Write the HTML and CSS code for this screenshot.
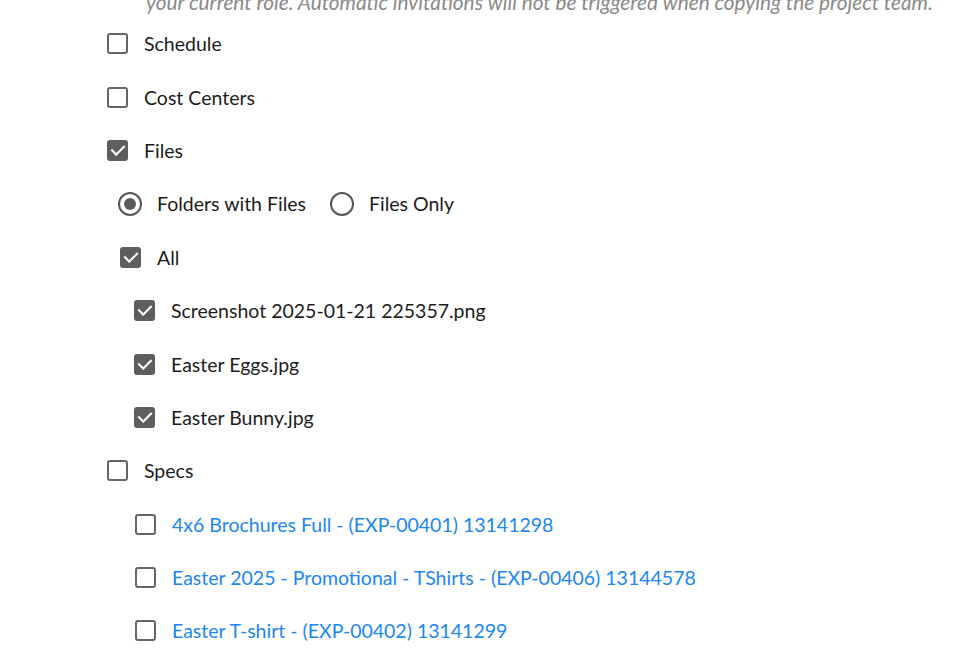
FILE: index.html
```html
<!DOCTYPE html>
<html>
  <head>
    <meta charset="UTF-8" />
    <link rel="stylesheet" href="styles.css">
  </head>

  <body>
    <div class="copy-options">
      <p class="note">your current role. Automatic invitations will not be triggered when copying the project team.</p>

      <label class="option">
        <span class="box"></span>
        Schedule
      </label>
      <label class="option">
        <span class="box"></span>
        Cost Centers
      </label>
      <label class="option">
        <span class="box checked"></span>
        Files
      </label>

      <div class="option radio-row level-1">
        <label class="radio-item">
          <span class="radio selected"></span>
          Folders with Files
        </label>
        <label class="radio-item">
          <span class="radio"></span>
          Files Only
        </label>
      </div>

      <label class="option level-1">
        <span class="box checked"></span>
        All
      </label>
      <label class="option level-2">
        <span class="box checked"></span>
        Screenshot 2025-01-21 225357.png
      </label>
      <label class="option level-2">
        <span class="box checked"></span>
        Easter Eggs.jpg
      </label>
      <label class="option level-2">
        <span class="box checked"></span>
        Easter Bunny.jpg
      </label>

      <label class="option">
        <span class="box"></span>
        Specs
      </label>
      <label class="option level-2 spec">
        <span class="box"></span>
        <a href="#">4x6 Brochures Full - (EXP-00401) 13141298</a>
      </label>
      <label class="option level-2 spec">
        <span class="box"></span>
        <a href="#">Easter 2025 - Promotional - TShirts - (EXP-00406) 13144578</a>
      </label>
      <label class="option level-2 spec">
        <span class="box"></span>
        <a href="#">Easter T-shirt - (EXP-00402) 13141299</a>
      </label>
    </div>
  </body>
</html>
```

FILE: styles.css
```css
body {
  margin: 0;
  background: white;
  font-family: Lato, 'Open Sans', sans-serif;
  color: #1c1c1c;
  overflow: hidden;
}

.copy-options {
  padding-left: 107px;
}

.note {
  margin: -10px 0 3px 39px;
  font-size: 20.8px;
  line-height: 24px;
  font-style: italic;
  color: #8a8a8a;
  white-space: nowrap;
}

.option {
  display: flex;
  align-items: center;
  gap: 16px;
  height: 53.4px;
  font-size: 19.5px;
}

.level-1 {
  padding-left: 13px;
}

.level-2 {
  padding-left: 27px;
}

.spec {
  padding-left: 28px;
}

.option a {
  color: #1c86f2;
  text-decoration: none;
}

.box {
  flex: none;
  box-sizing: border-box;
  width: 21px;
  height: 21px;
  border: 2px solid #666;
  border-radius: 3px;
  position: relative;
}

.box.checked {
  background: #5e5e5e;
  border-color: #5e5e5e;
}

.box.checked::after {
  content: '';
  position: absolute;
  left: 5px;
  top: 0;
  width: 6px;
  height: 11px;
  border-right: 2.5px solid white;
  border-bottom: 2.5px solid white;
  transform: rotate(45deg);
}

.radio-row {
  gap: 24px;
  padding-left: 11px;
}

.radio-item {
  display: flex;
  align-items: center;
  gap: 15px;
}

.radio {
  flex: none;
  box-sizing: border-box;
  width: 24px;
  height: 24px;
  border: 2px solid #555;
  border-radius: 50%;
  display: flex;
  align-items: center;
  justify-content: center;
}

.radio.selected::after {
  content: '';
  width: 12px;
  height: 12px;
  border-radius: 50%;
  background: #5a5a5a;
}
```
